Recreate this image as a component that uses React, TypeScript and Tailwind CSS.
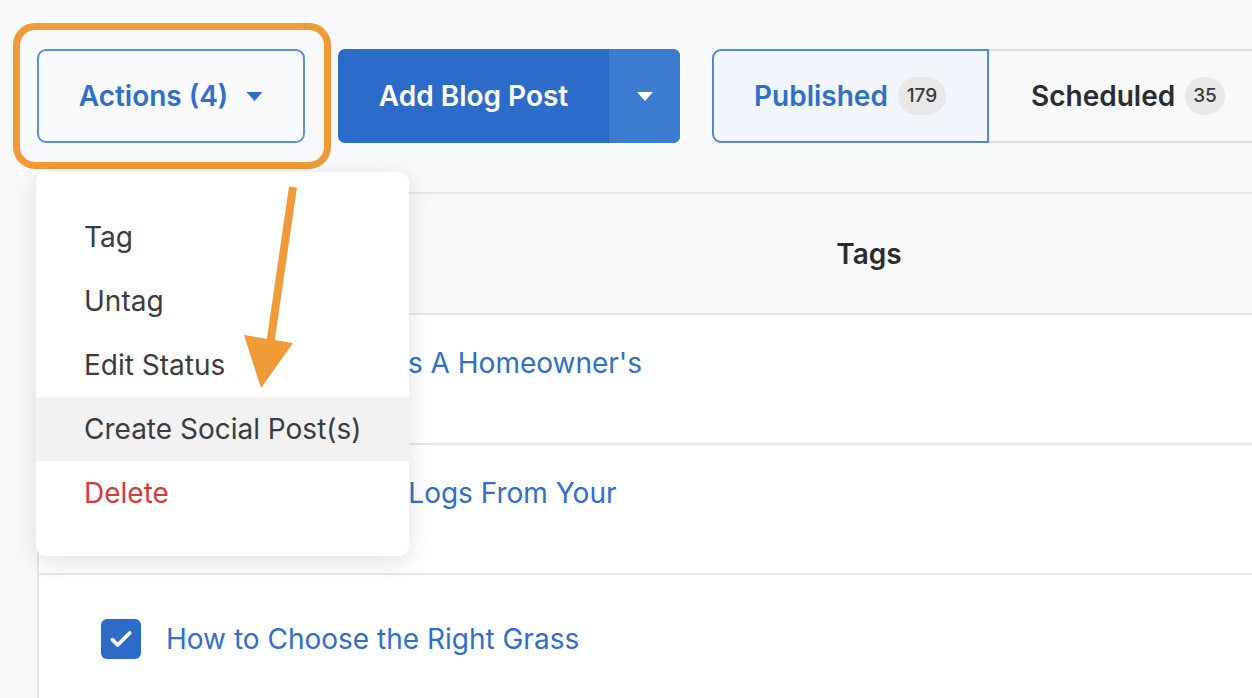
import React from "react";

const rows = [
  { title: ["Why Proper Care Is A Homeowner's", "Best Friend"], checked: true },
  { title: ["Clearing Up Dead Logs From Your", "Yard"], checked: true },
  { title: ["How to Choose the Right Grass"], checked: true },
];

const menuItems = ["Tag", "Untag", "Edit Status", "Create Social Post(s)"];

function Caret({ className }: { className?: string }) {
  return (
    <svg viewBox="0 0 16 9" className={className} fill="currentColor">
      <path d="M0 0h16L8 9z" />
    </svg>
  );
}

export default function App() {
  return (
    <div
      className="relative h-[698px] w-[1252px] overflow-hidden bg-[#f8f9fb] text-[#2b2c30]"
      style={{ fontFamily: "Inter, 'Liberation Sans', sans-serif" }}
    >
      {/* toolbar */}
      <div className="flex items-center pl-[37px] pt-[49px]">
        <div className="relative shrink-0">
          <button className="flex h-[94px] w-[268px] items-center justify-center gap-[18px] rounded-[9px] border-2 border-[#5c91da] bg-[#f8fafc] text-[28px] font-semibold text-[#2e6fcc]">
            Actions (4)
            <Caret className="h-[9px] w-[17px]" />
          </button>
          <div className="pointer-events-none absolute -inset-[26px] -left-[24px] rounded-[22px] border-[7px] border-[#f09a38]" />
        </div>

        <div className="ml-[33px] flex h-[94px] w-[342px] shrink-0 overflow-hidden rounded-[7px] bg-[#2c6bc7] text-white">
          <div className="flex flex-1 items-center justify-center text-[28px] font-semibold">Add Blog Post</div>
          <div className="flex w-[71px] items-center justify-center bg-[#3b7bd0]">
            <Caret className="h-[9px] w-[18px]" />
          </div>
        </div>

        <div className="ml-[32px] flex h-[94px] shrink-0">
          <div className="flex w-[277px] shrink-0 items-center gap-[10px] rounded-l-[9px] border-2 border-[#4f88d6] bg-[#f1f6fc] pl-[40px] text-[28px] font-semibold text-[#2e6fcc]">
            Published
            <span className="flex h-[38px] min-w-[48px] items-center justify-center rounded-full bg-[#e8e8e8] px-[8px] text-[19px] font-medium text-[#3a3a3a]">
              179
            </span>
          </div>
          <div className="flex w-[300px] shrink-0 items-center gap-[10px] border-y-2 border-[#dcdee2] bg-[#f8f9fb] pl-[42px] text-[28px] font-semibold text-[#2b2c30]">
            Scheduled
            <span className="flex h-[38px] min-w-[39px] items-center justify-center rounded-full bg-[#e8e8e8] px-[8px] text-[19px] font-medium text-[#3a3a3a]">
              35
            </span>
          </div>
        </div>
      </div>

      {/* table */}
      <div className="ml-[37px] mt-[49px] border-l-2 border-t-2 border-[#e6e6e6] bg-white">
        <div className="flex h-[121px] items-center border-b-2 border-[#e6e6e6] bg-[#f9f9f9]">
          <div className="w-[658px] shrink-0" />
          <div className="w-[344px] shrink-0 text-center text-[28px] font-semibold text-[#2b2c30]">Tags</div>
        </div>
        {rows.map((r, i) => (
          <div key={i} className="flex h-[130px] items-center border-b-2 border-[#e6e6e6]">
            <div className="flex w-[760px] shrink-0 items-center gap-[25px] pl-[62px]">
              <span className="flex h-[40px] w-[40px] shrink-0 items-center justify-center rounded-[6px] bg-[#2c6bc7]">
                <svg viewBox="0 0 24 24" className="h-[32px] w-[32px]" fill="none" stroke="white" strokeWidth="2.8" strokeLinecap="round" strokeLinejoin="round">
                  <path d="M5.5 12.5l4 4L18.5 7.5" />
                </svg>
              </span>
              <div className="text-[28px] leading-[32px] text-[#2e6fcc]">
                {r.title.map((t, j) => (
                  <div key={j}>{t}</div>
                ))}
              </div>
            </div>
          </div>
        ))}
      </div>

      {/* dropdown */}
      <div className="absolute left-[36px] top-[172px] w-[373px] rounded-[10px] bg-white pb-[31px] pt-[33px] shadow-[0_6px_24px_rgba(0,0,0,0.12)]">
        {menuItems.map((m, i) => (
          <div
            key={m}
            className={`flex h-[64px] items-center pl-[48px] text-[28px] text-[#3a3b3f] ${i === 3 ? "bg-[#f2f2f2]" : ""}`}
          >
            {m}
          </div>
        ))}
        <div className="flex h-[64px] items-center pl-[48px] text-[28px] text-[#d83a3a]">Delete</div>
      </div>

      {/* annotation arrow */}
      <svg className="pointer-events-none absolute left-0 top-0" width="1252" height="698">
        <line x1="293" y1="187" x2="270" y2="345" stroke="#f09a38" strokeWidth="8" />
        <polygon points="244,335 293,343 261,388" fill="#f09a38" />
      </svg>
    </div>
  );
}
